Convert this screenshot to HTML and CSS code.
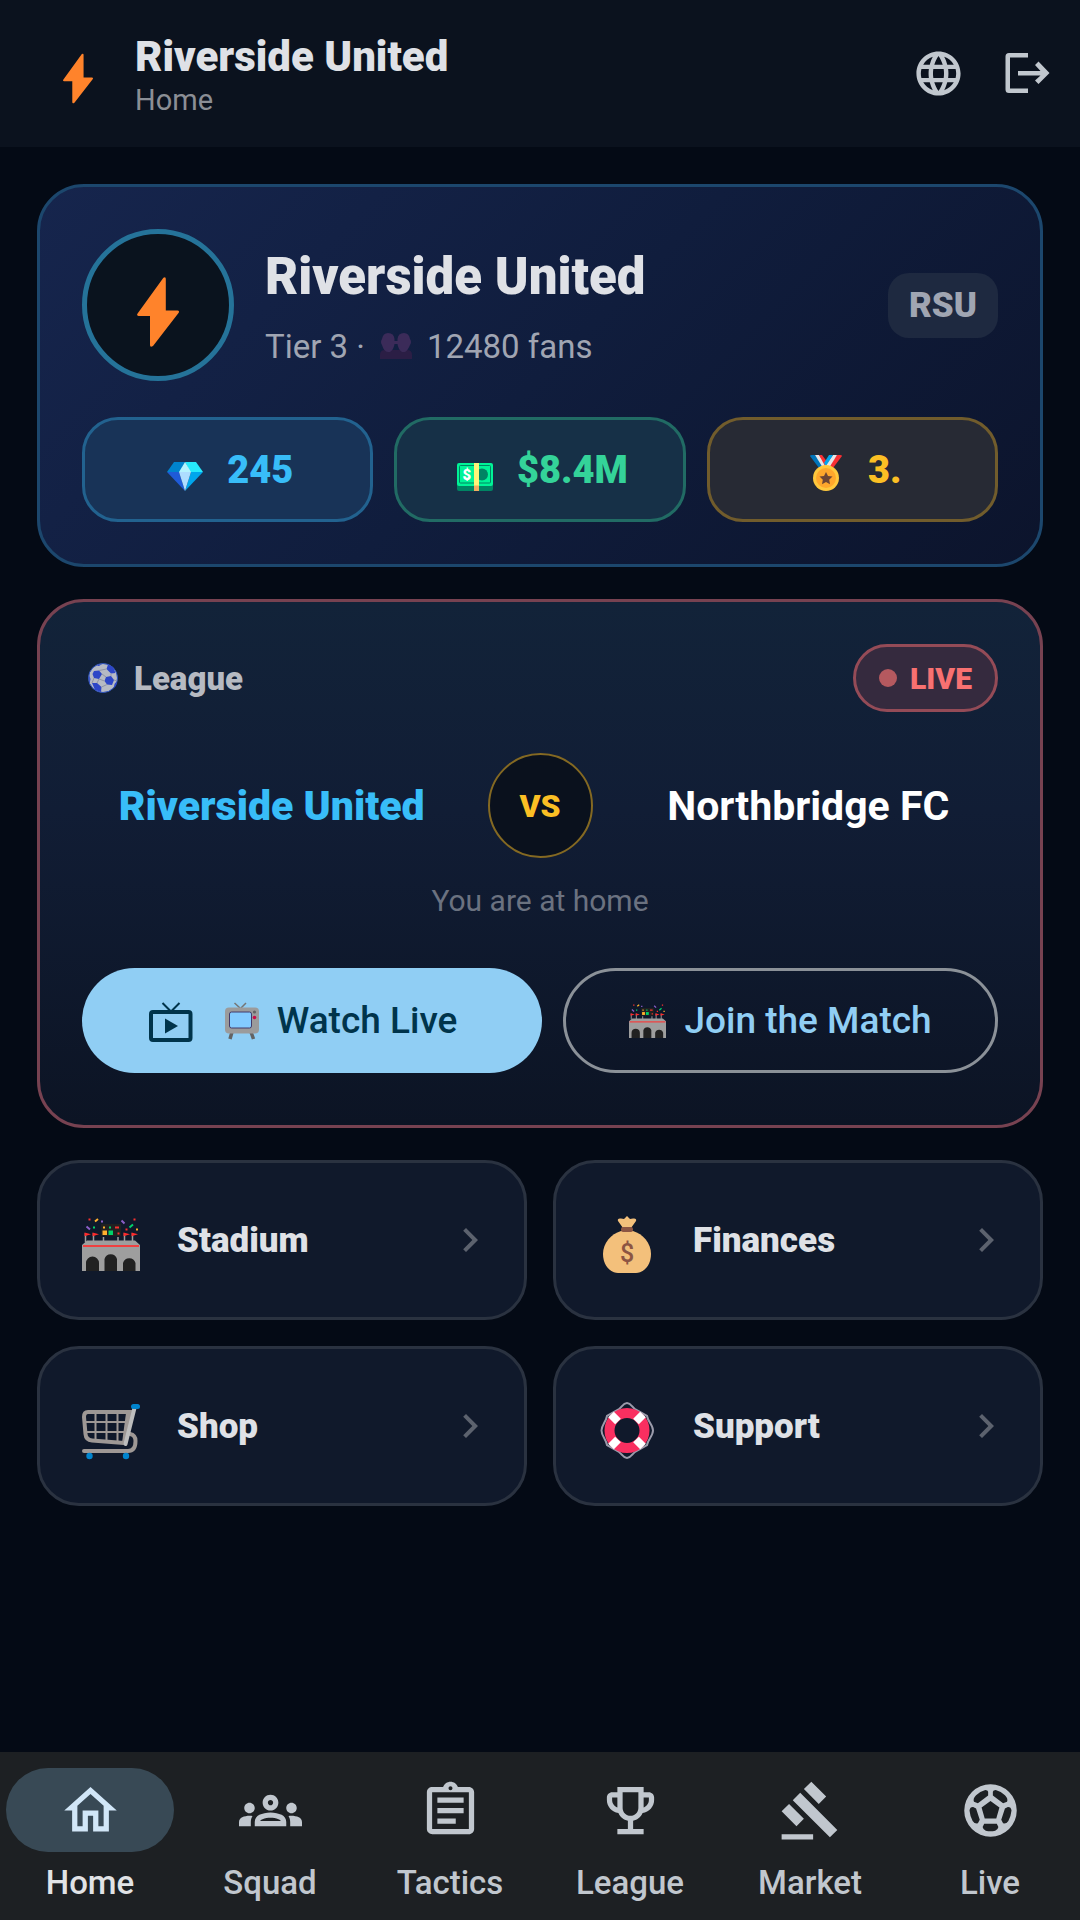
FILE: index.html
```
<!DOCTYPE html>
<html lang="en">
<head>
    <meta charset="UTF-8">
    <meta name="viewport" content="width=device-width, initial-scale=1.0">
    <title>Riverside United - Home</title>
    <link rel="stylesheet" href="styles.css">
</head>
<body>
    <!-- Shared icons -->
    <svg class="sprite" aria-hidden="true">
        <symbol id="bolt" viewBox="0 0 42 70">
            <path d="M26.4.8Q28.8-.8 28.8 2V33.500H40.500Q43 34 41.500 36L16 69Q13 71 13 68V39H1.500Q-.8 38.500.6 36.500Z" fill="#ff832b"/>
        </symbol>
        <symbol id="stadium" viewBox="0 0 58 53">
            <rect x="19" y="6" width="20" height="12" fill="#212121"/>
            <path d="M3.500 15v9M11.500 15v9M21.500 19v5M36 19v5M42.500 15v9M50.500 15v9" stroke="#9e9e9e" stroke-width="1.500"/>
            <path d="M5 22.500H53L58 27V53H0V27Z" fill="#9e9e9e"/>
            <path d="M1 28H57" stroke="#f04040" stroke-width="2"/>
            <path d="M4 53V45a6.500 6.500 0 0 1 13 0V53ZM22.500 53V41a6.500 6.500 0 0 1 12.500 0V53ZM41 53V45a6.500 6.500 0 0 1 12.500 0V53Z" fill="#212121"/>
            <path d="M2.500 14.500l6.500 1.800-6.500 2ZM10.500 14.500l6.500 1.800-6.500 2ZM41.500 14.500l6.500 1.800-6.500 2ZM49.500 14.500l6.500 1.800-6.500 2Z" fill="#ff2a2a"/>
            <rect x="20.500" y="12.500" width="4.500" height="4.500" fill="#ffb02e"/>
            <rect x="26.500" y="12.500" width="4.500" height="4.500" fill="#00d26a"/>
            <path d="M33 9.500h4M35.500 15.500h2M6.500 1.500h2M51.500 1.500h2M43.500 11.500h2" stroke="#f8312f" stroke-width="2"/>
            <path d="M13 3.500l3-2.500M21 9.500h2M54 11.500h2" stroke="#ffb02e" stroke-width="2"/>
            <path d="M4.500 8.500l3.500 3M39.500 2.500l3 3M19 3.500h2" stroke="#8b5fc7" stroke-width="2"/>
            <path d="M47.500 9.500l3.500-3M11 9.500h2M27 9.500h2" stroke="#00d26a" stroke-width="2"/>
        </symbol>
        <symbol id="chevron" viewBox="0 0 24 24">
            <path d="M10 6 8.590 7.410 13.170 12l-4.580 4.590L10 18l6-6z" fill="currentColor"/>
        </symbol>
    </svg>

    <header class="app-bar">
        <svg class="app-logo"><use href="#bolt"/></svg>
        <div class="app-heading">
            <h1>Riverside United</h1>
            <p>Home</p>
        </div>
        <div class="app-actions">
            <button type="button" class="icon-btn" aria-label="Language">
                <svg viewBox="0 0 24 24"><path d="M11.990 2C6.470 2 2 6.480 2 12s4.470 10 9.990 10C17.520 22 22 17.520 22 12S17.520 2 11.990 2zm6.930 6h-2.950c-.32-1.250-.78-2.450-1.380-3.560 1.840.63 3.370 1.910 4.330 3.560zM12 4.040c.83 1.200 1.480 2.530 1.910 3.960h-3.820c.43-1.430 1.080-2.760 1.910-3.960zM4.260 14C4.100 13.360 4 12.690 4 12s.1-1.360.26-2h3.380c-.08.66-.14 1.320-.14 2s.06 1.340.14 2H4.260zm.82 2h2.950c.32 1.250.78 2.450 1.380 3.560-1.840-.63-3.370-1.900-4.330-3.560zm2.950-8H5.080c.96-1.660 2.490-2.930 4.330-3.560C8.810 5.550 8.350 6.750 8.030 8zM12 19.960c-.83-1.200-1.480-2.530-1.910-3.960h3.820c-.43 1.430-1.080 2.760-1.910 3.960zM14.340 14H9.660c-.09-.66-.16-1.320-.16-2s.07-1.350.16-2h4.680c.09.65.16 1.320.16 2s-.07 1.340-.16 2zm.25 5.560c.6-1.110 1.060-2.310 1.380-3.560h2.950c-.96 1.650-2.490 2.930-4.330 3.560zM16.360 14c.08-.66.14-1.320.14-2s-.06-1.340-.14-2h3.380c.16.64.26 1.310.26 2s-.1 1.360-.26 2h-3.380z"/></svg>
            </button>
            <button type="button" class="icon-btn" aria-label="Log out">
                <svg viewBox="0 0 53 53"><path d="M27 6H8Q4.500 6 4.500 9.500V42.500Q4.500 46 8 46H27V41.500H9V10.500H27Z"/><path d="M17 24H39.500L34 18 37.500 14.500 48.500 26 37.500 37 34 33.500 39.500 28.500H17Z"/></svg>
            </button>
        </div>
    </header>

    <main class="content">
        <section class="card club-card">
            <div class="club-row">
                <div class="club-badge"><svg><use href="#bolt"/></svg></div>
                <div class="club-info">
                    <h2>Riverside United</h2>
                    <p>
                        <span>Tier 3 ·</span>
                        <svg class="fans-icon" viewBox="0 0 32 26"><path d="M0 26V22Q0 17 5 17H27Q32 17 32 22V26Z" fill="#2b1e45"/><path d="M8 0Q14 0 14.500 6V8H17.500V6Q18 0 24 0Q29 0 30 6Q32 9 30 12Q27 19 24.500 19H22Q18 16 17.500 11H14.500Q14 16 10 19H8Q4 19 2 12Q0 9 2 6Q3 0 8 0Z" fill="#3b2b59"/></svg>
                        <span>12480 fans</span>
                    </p>
                </div>
                <span class="club-code">RSU</span>
            </div>
            <div class="stats">
                <div class="stat stat-gems">
                    <svg viewBox="0 0 46 46"><path d="M12 15H23L18 25H5Z" fill="#0084ce"/><path d="M34 15H23L28 25H41Z" fill="#26eafc"/><path d="M23 15 17 25H29Z" fill="#b5f4ff"/><path d="M5 25H17L23 44Z" fill="#1f5bd8"/><path d="M41 25H29L23 44Z" fill="#00a6ed"/><path d="M17 25H29L23 44Z" fill="#aeddff"/></svg>
                    <span>245</span>
                </div>
                <div class="stat stat-money">
                    <svg viewBox="0 0 46 46"><rect x="5" y="34" width="36" height="10" rx="2" fill="#008463"/><rect x="5" y="16" width="36" height="23" rx="2" fill="#00f397"/><rect x="7.500" y="18.500" width="31" height="17.500" rx="1" fill="none" stroke="#008463"/><circle cx="30" cy="27.500" r="6" fill="#008463"/><text x="10.500" y="32.500" font-size="15" fill="#fff">$</text><rect x="22" y="16" width="5" height="23" fill="#fff478"/><rect x="22" y="38.500" width="5" height="5.500" fill="#f3ad61"/></svg>
                    <span>$8.4M</span>
                </div>
                <div class="stat stat-rank">
                    <svg viewBox="0 0 46 46"><path d="M7 9Q7 8 9 8H12L22 20 16 21Z" fill="#0074ba"/><path d="M12 8H16L24 19 20 21Z" fill="#e6e6e6"/><path d="M16 8H19L25 16 22 19Z" fill="#f92f33"/><path d="M39 9Q39 8 37 8H34L24 20 30 21Z" fill="#f92f33"/><path d="M34 8H30L22 19 26 21Z" fill="#e6e6e6"/><path d="M30 8H26L21 16 23 19Z" fill="#00a6ed"/><circle cx="23" cy="31" r="13" fill="#ffc83d"/><circle cx="23" cy="31" r="10" fill="#ffa72c"/><path d="M23 25l2 4 4.500.6-3.300 3.100.8 4.500L23 35l-4 2.200.8-4.500-3.300-3.100 4.500-.6Z" fill="#6d4534"/></svg>
                    <span>3.</span>
                </div>
            </div>
        </section>

        <section class="card match-card">
            <div class="match-header">
                <div class="match-type">
                    <svg viewBox="0 0 30 30"><circle cx="15" cy="15" r="14.500" fill="#b6bac4" stroke="#2950bd"/><path d="M6 8 11 7.500 14 11 11 16 6 15 4.500 11ZM20 1.500 25 4 27.500 10 23 10.500 18.500 6ZM18 14 23 13 26 17 24 22 19 21.500 16.500 18ZM4 20 9 20 13.500 24 13 29 7 27ZM1 12 2.500 16 1.500 21ZM29 18 28 23 26 25 26.500 21ZM8 2.500 14 1 11 3Z" fill="#2d46c7"/><path d="M11 7.500 18.500 6M14 11l4 3M11 16l5.500 2M6 15l-2 5M9 20l2-4M13.500 24l5.500-2.500M23 13v-2.500M26 17l3 1" stroke="#8f94a5" fill="none"/></svg>
                    <span>League</span>
                </div>
                <div class="live-pill"><i class="live-dot"></i><span>LIVE</span></div>
            </div>
            <div class="teams">
                <span class="team team-home">Riverside United</span>
                <span class="versus">VS</span>
                <span class="team">Northbridge FC</span>
            </div>
            <p class="venue">You are at home</p>
            <div class="match-actions">
                <button type="button" class="btn btn-filled">
                    <svg class="watch-icon" viewBox="0 0 44 44"><rect x="2" y="13" width="39.500" height="28" rx="2" fill="none" stroke="#00344b" stroke-width="4"/><path d="M16 19.500 29 27 16 34.500Z" fill="#00344b"/><path d="M13.500 4 22 12.500 30.500 4" fill="none" stroke="#00344b" stroke-width="2"/></svg>
                    <span class="btn-label">
                        <svg class="tv-icon" viewBox="0 0 34 38"><path d="M9.500 1 15 6M21 1 16 6" stroke="#757575" stroke-width="1.500"/><path d="M7 30 5 37M26 30 28.500 37" stroke="#636363" stroke-width="3.500"/><rect x="0" y="5.500" width="34" height="26" rx="4" fill="#9b9b9b"/><rect x="4.500" y="10" width="22" height="16" rx="2" fill="#83cbff" stroke="#433b6b"/><circle cx="29.500" cy="10" r="1.600" fill="#636363"/><circle cx="29.500" cy="15.500" r="1.800" fill="#ca0b4a"/></svg>
                        Watch Live
                    </span>
                </button>
                <button type="button" class="btn btn-outlined">
                    <span class="btn-label"><svg class="stadium-small"><use href="#stadium"/></svg>Join the Match</span>
                </button>
            </div>
        </section>

        <nav class="shortcuts" aria-label="Shortcuts">
            <a class="shortcut" href="#stadium-page">
                <svg class="shortcut-icon" viewBox="0 0 74 74"><use href="#stadium" x="8" y="15" width="58" height="53"/></svg>
                <span>Stadium</span>
                <svg class="chevron"><use href="#chevron"/></svg>
            </a>
            <a class="shortcut" href="#finances">
                <svg class="shortcut-icon" viewBox="0 0 74 74"><path d="M28 18Q27 15 31 15.500L34 16 37 13 40 16 43 15.500Q47 15 46 18L41 25H33Z" fill="#f3c07b"/><path d="M31 28H43C53 31 61 40 61 51C61 63 53 70 46 70H28C21 70 13 63 13 51C13 40 21 31 31 28Z" fill="#f3c07b"/><rect x="31" y="24" width="12" height="5" rx="2" fill="#8c5543"/><text x="37" y="59" text-anchor="middle" font-size="25" font-weight="500" fill="#8c5543">$</text></svg>
                <span>Finances</span>
                <svg class="chevron"><use href="#chevron"/></svg>
            </a>
            <a class="shortcut" href="#shop">
                <svg class="shortcut-icon" viewBox="0 0 74 74"><path d="M56 45Q61.500 46 61.500 52Q61.500 62 54 62H10" fill="none" stroke="#9e9895" stroke-width="4" stroke-linecap="round"/><path d="M59 23H14Q10 23 10 28L11.500 45Q12 51 18 51.500L50 54" fill="none" stroke="#9e9895" stroke-width="4"/><path d="M52 24 48 54H52L60 23Z" fill="#9e9895"/><path d="M21.500 24V52M32.500 24V53M43.500 24V53M11 33H52M11 43H51" stroke="#9e9895" stroke-width="2"/><path d="M61 17 51.500 55" stroke="#bdbdbd" stroke-width="4" stroke-linecap="round"/><rect x="57" y="15" width="9" height="5" rx="2.500" fill="#0084ce"/><circle cx="15.500" cy="67" r="3.200" fill="#0084ce"/><circle cx="52" cy="67" r="3.200" fill="#0084ce"/></svg>
                <span>Shop</span>
                <svg class="chevron"><use href="#chevron"/></svg>
            </a>
            <a class="shortcut" href="#support">
                <svg class="shortcut-icon" viewBox="0 0 74 74"><path d="M37 14C41 14 42 18 45 20L57 27C58 33 63 36 63 41.500C63 47 58 50 57 56L45 63C42 65 41 69 37 69C33 69 32 65 29 63L17 56C16 50 11.500 47 11.500 41.500C11.500 36 16 33 17 27L29 20C32 18 33 14 37 14Z" fill="none" stroke="#9b9bab" stroke-width="2"/><circle cx="37" cy="41.500" r="17.500" fill="none" stroke="#f92f60" stroke-width="10"/><path d="M21 25.500 28 32.500M53 25.500 46 32.500M21 57.500 28 50.500M53 57.500 46 50.500" stroke="#fff" stroke-width="8"/></svg>
                <span>Support</span>
                <svg class="chevron"><use href="#chevron"/></svg>
            </a>
        </nav>
    </main>

    <nav class="tab-bar" aria-label="Main">
        <a class="tab active" href="#home" aria-current="page">
            <span class="tab-icon"><svg viewBox="0 0 24 24"><path d="m12 5.690 5 4.500V18h-2v-6H9v6H7v-7.810l5-4.500M12 3 2 12h3v8h6v-6h2v6h6v-8h3L12 3z"/></svg></span>
            <span>Home</span>
        </a>
        <a class="tab" href="#squad">
            <span class="tab-icon"><svg viewBox="0 0 24 24"><path d="M4 13c1.100 0 2-.9 2-2s-.9-2-2-2-2 .9-2 2 .9 2 2 2zm1.130 1.100C4.760 14.040 4.390 14 4 14c-.99 0-1.930.21-2.780.58C.48 14.900 0 15.620 0 16.430V18h4.500v-1.610c0-.83.23-1.610.63-2.290zM20 13c1.100 0 2-.9 2-2s-.9-2-2-2-2 .9-2 2 .9 2 2 2zm4 3.430c0-.81-.48-1.530-1.220-1.850C21.930 14.210 20.990 14 20 14c-.39 0-.76.040-1.130.1.4.68.63 1.460.63 2.290V18H24v-1.570zM16.240 13.650c-1.170-.52-2.610-.9-4.240-.9s-3.070.39-4.240.9C6.680 14.130 6 15.210 6 16.390V18h12v-1.610c0-1.180-.68-2.260-1.760-2.740zM8.070 16c.09-.23.13-.39.91-.69.97-.38 1.990-.56 3.020-.56s2.050.18 3.020.56c.77.3.81.46.91.69H8.070zM12 8c.55 0 1 .45 1 1s-.45 1-1 1-1-.45-1-1 .45-1 1-1m0-2c-1.660 0-3 1.340-3 3s1.340 3 3 3 3-1.340 3-3-1.340-3-3-3z"/></svg></span>
            <span>Squad</span>
        </a>
        <a class="tab" href="#tactics">
            <span class="tab-icon"><svg viewBox="0 0 24 24"><path d="M7 15h7v2H7zm0-4h10v2H7zm0-4h10v2H7zm12-4h-4.180C14.400 1.840 13.300 1 12 1s-2.400.84-2.820 2H5c-.14 0-.27.010-.4.040-.39.080-.74.280-1.010.55-.18.180-.33.400-.43.640-.1.230-.16.490-.16.770v14c0 .27.060.54.160.78s.250.450.430.64c.27.270.62.470 1.010.55.130.020.260.030.400.030h14c1.100 0 2-.9 2-2V5c0-1.100-.9-2-2-2zm-7-.25c.41 0 .75.340.75.75s-.34.750-.75.750-.75-.34-.75-.75.340-.75.750-.75zM19 19H5V5h14v14z"/></svg></span>
            <span>Tactics</span>
        </a>
        <a class="tab" href="#league">
            <span class="tab-icon"><svg viewBox="0 0 24 24"><path d="M19 5h-2V3H7v2H5c-1.100 0-2 .9-2 2v1c0 2.550 1.920 4.630 4.390 4.940.63 1.500 1.980 2.630 3.610 2.960V19H7v2h10v-2h-4v-3.100c1.630-.33 2.980-1.460 3.610-2.960C19.080 12.630 21 10.550 21 8V7c0-1.100-.9-2-2-2zM5 8V7h2v3.820C5.840 10.400 5 9.300 5 8zm7 6c-1.650 0-3-1.350-3-3V5h6v6c0 1.650-1.350 3-3 3zm7-6c0 1.300-.84 2.400-2 2.820V7h2v1z"/></svg></span>
            <span>League</span>
        </a>
        <a class="tab" href="#market">
            <span class="tab-icon"><svg viewBox="0 0 24 24"><path d="M1 21h12v2H1zM5.245 8.070l2.830-2.827 14.140 14.142-2.828 2.828zM12.317 1l5.657 5.656-2.830 2.830-5.654-5.660zM3.825 9.485l5.657 5.657-2.828 2.828-5.657-5.657z"/></svg></span>
            <span>Market</span>
        </a>
        <a class="tab" href="#live">
            <span class="tab-icon"><svg viewBox="0 0 24 24"><path fill-rule="evenodd" d="M12 2a10 10 0 1 0 0 20 10 10 0 0 0 0-20ZM11.100 4.900V6.300L7.200 9.200 5.700 8.700Q5.200 7.500 6.500 6.200 8 4.700 10 4.200 11 4.200 11.100 4.900ZM12.900 4.900V6.300L16.800 9.200 18.300 8.700Q18.800 7.500 17.500 6.200 16 4.700 14 4.200 13 4.200 12.900 4.900ZM12 8.400 15.400 10.900 14.200 15H9.800L8.600 10.900ZM5.400 10.700 6.500 11.200 7.900 15.500 7.200 16.900Q6 17.200 5.200 16 4.200 14.200 4 12 4.200 10.600 5.400 10.700ZM18.600 10.700 17.500 11.200 16.100 15.500 16.800 16.900Q18 17.200 18.800 16 19.800 14.200 20 12 19.800 10.600 18.600 10.700ZM9.600 17H14.400L15 18.300Q14.800 19.400 13.800 19.700 12 20.100 10.200 19.700 9.200 19.400 9 18.300Z"/></svg></span>
            <span>Live</span>
        </a>
    </nav>
</body>
</html>
```
FILE: styles.css
```
:root {
    --bg: #040a15;
    --bar: #0b121e;
    --text: #dfe1e6;
    --muted: #c1c7ce;
    --sky: #38bdf8;
    --green: #34d399;
    --gold: #fbbf24;
    --red: #f87171;
    --primary: #90cef4;
}

* {
    box-sizing: border-box;
}

body {
    display: flex;
    flex-direction: column;
    min-height: 100vh;
    margin: 0;
    background: var(--bg);
    color: var(--text);
    font-family: Roboto, sans-serif;
}

h1, h2, p {
    margin: 0;
}

a {
    color: inherit;
    text-decoration: none;
}

button {
    font-family: inherit;
    cursor: pointer;
}

svg {
    display: block;
    flex-shrink: 0;
}

.sprite {
    position: absolute;
    width: 0;
    height: 0;
}

/* Top bar */
.app-bar {
    display: flex;
    align-items: center;
    height: 147px;
    padding: 0 26px 0 63px;
    background: var(--bar);
}

.app-logo {
    width: 30px;
    height: 51px;
    margin-top: 10px;
    margin-right: 42px;
}

.app-heading {
    flex-grow: 1;
    padding-top: 4px;
}

.app-heading h1 {
    font-size: 42px;
    font-weight: 900;
    line-height: 50px;
}

.app-heading p {
    font-size: 29px;
    line-height: 37px;
    color: #8b8e95;
}

.app-actions {
    display: flex;
    gap: 36px;
}

.icon-btn {
    padding: 0;
    border: none;
    background: none;
}

.icon-btn svg {
    width: 53px;
    height: 53px;
    fill: var(--muted);
}

/* Page content */
.content {
    display: flex;
    flex-direction: column;
    flex-grow: 1;
    gap: 32px;
    padding: 37px;
}

.card {
    padding: 42px;
    border: 3px solid;
    border-radius: 47px;
}

.club-card {
    display: flex;
    flex-direction: column;
    gap: 36px;
    border-color: #1c476d;
    background: linear-gradient(135deg, #16254d, #101d3d 50%, #0c142c);
}

.club-row {
    display: flex;
    align-items: center;
    gap: 31px;
}

.club-badge {
    display: flex;
    justify-content: center;
    width: 152px;
    height: 152px;
    padding-top: 43px;
    border: 5px solid #257399;
    border-radius: 50%;
    background: #0a131e;
}

.club-badge svg {
    width: 42px;
    height: 70px;
}

.club-info {
    flex-grow: 1;
}

.club-info h2 {
    margin-bottom: 20px;
    font-size: 51px;
    font-weight: 900;
    line-height: 62px;
}

.club-info p {
    display: flex;
    align-items: center;
    gap: 15px;
    font-size: 33px;
    line-height: 37px;
    color: #a0a5b2;
}

.fans-icon {
    width: 32px;
    height: 26px;
}

.club-code {
    padding: 14px 21px;
    border-radius: 21px;
    background: #1e2940;
    font-size: 35px;
    font-weight: 900;
    line-height: 37px;
    color: #a0a5b2;
}

.stats {
    display: grid;
    grid-template-columns: repeat(3, 1fr);
    gap: 21px;
}

.stat {
    display: flex;
    align-items: center;
    justify-content: center;
    gap: 19px;
    height: 105px;
    border: 3px solid;
    border-radius: 36px;
    font-size: 38px;
    font-weight: 900;
}

.stat svg {
    width: 46px;
    height: 46px;
}

.stat-gems {
    border-color: #22628f;
    background: #183357;
    color: var(--sky);
}

.stat-money {
    border-color: #216b64;
    background: #163047;
    color: var(--green);
}

.stat-rank {
    border-color: #715c2c;
    background: #272a34;
    color: var(--gold);
}

/* Match card */
.match-card {
    border-color: #774251;
    background: linear-gradient(#122339, #111d35 40%, #0c1424);
}

.match-header {
    display: flex;
    align-items: center;
    justify-content: space-between;
}

.match-type {
    display: flex;
    align-items: center;
    gap: 16px;
    padding-left: 6px;
    font-size: 33px;
    font-weight: 900;
    color: #b6bac2;
}

.match-type svg {
    width: 30px;
    height: 30px;
}

.live-pill {
    display: flex;
    align-items: center;
    gap: 13px;
    height: 68px;
    padding: 0 23px;
    border: 3px solid #944b57;
    border-radius: 34px;
    background: #352a3e;
    font-size: 30px;
    font-weight: 900;
    color: var(--red);
}

.live-dot {
    width: 18px;
    height: 18px;
    border-radius: 50%;
    background: #b5595f;
}

.teams {
    display: grid;
    grid-template-columns: 1fr auto 1fr;
    align-items: center;
    gap: 26px;
    margin-top: 41px;
}

.team {
    font-size: 41px;
    font-weight: 700;
    text-align: center;
    color: #fff;
}

.team-home {
    font-weight: 900;
    color: var(--sky);
}

.versus {
    display: flex;
    align-items: center;
    justify-content: center;
    width: 105px;
    height: 105px;
    border: 2px solid #846922;
    border-radius: 50%;
    background: #0a111d;
    font-size: 32px;
    font-weight: 900;
    color: var(--gold);
}

.venue {
    margin-top: 24px;
    font-size: 30px;
    line-height: 37px;
    text-align: center;
    color: #6b7280;
}

.match-actions {
    display: flex;
    gap: 21px;
    margin: 49px 0 10px;
}

.btn {
    display: flex;
    align-items: center;
    justify-content: center;
    gap: 32px;
    height: 105px;
    padding: 0;
    border-radius: 53px;
    font-size: 37px;
    font-weight: 500;
    white-space: nowrap;
}

.btn-filled {
    flex: 443 1 0;
    padding-right: 18px;
    border: none;
    background: var(--primary);
    color: #00344b;
}

.btn-outlined {
    flex: 430 1 0;
    border: 3px solid #8b9198;
    background: none;
    color: var(--primary);
}

.btn-label {
    display: flex;
    align-items: center;
    gap: 18px;
}

.watch-icon {
    width: 44px;
    height: 44px;
}

.tv-icon {
    width: 34px;
    height: 38px;
}

.stadium-small {
    width: 37px;
    height: 34px;
}

/* Shortcuts */
.shortcuts {
    display: grid;
    grid-template-columns: repeat(2, 1fr);
    gap: 26px;
}

.shortcut {
    display: flex;
    align-items: center;
    gap: 29px;
    height: 160px;
    padding: 0 30px 0 34px;
    border: 3px solid #2a3240;
    border-radius: 42px;
    background: #10192b;
    font-size: 35px;
    font-weight: 900;
}

.shortcut-icon {
    width: 74px;
    height: 74px;
}

.chevron {
    width: 48px;
    height: 48px;
    margin-left: auto;
    color: #5c626e;
}

/* Bottom tabs */
.tab-bar {
    display: grid;
    grid-template-columns: repeat(6, 1fr);
    height: 168px;
    padding-top: 16px;
    background: #1d2023;
}

.tab {
    display: flex;
    flex-direction: column;
    align-items: center;
    gap: 12px;
    font-size: 33px;
    font-weight: 500;
    line-height: 38px;
    color: var(--muted);
}

.tab-icon {
    display: flex;
    align-items: center;
    justify-content: center;
    width: 168px;
    height: 84px;
    border-radius: 42px;
}

.tab-icon svg {
    width: 63px;
    height: 63px;
    fill: currentColor;
}

.tab.active {
    color: #e1e3e6;
}

.active .tab-icon {
    background: #384955;
    color: #d1e6f7;
}
```
